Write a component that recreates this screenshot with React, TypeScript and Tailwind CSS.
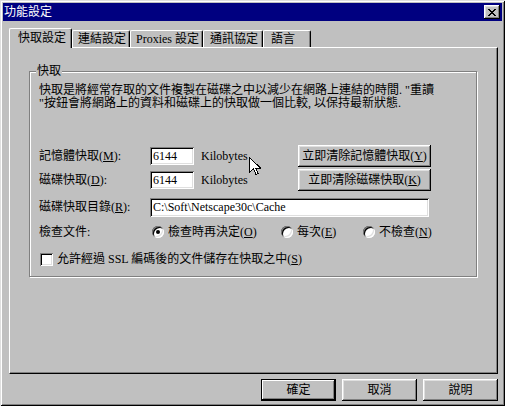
import React from "react";

// win95 bevels
const raised =
  "bg-[#c0c0c0] shadow-[inset_-1px_-1px_0_#000,inset_1px_1px_0_#fff,inset_-2px_-2px_0_#808080,inset_2px_2px_0_#dfdfdf]";
const sunken =
  "bg-white shadow-[inset_1px_1px_0_#808080,inset_-1px_-1px_0_#fff,inset_2px_2px_0_#000,inset_-2px_-2px_0_#dfdfdf]";

const tabs = [
  { label: "快取設定", cls: "w-[63px] pl-[8px]", active: true },
  { label: "連結設定", cls: "w-[58px] pl-[5px]" },
  { label: "Proxies 設定", cls: "w-[73px] pl-[5px]" },
  { label: "通訊協定", cls: "w-[60px] pl-[6px]" },
  { label: "語言", cls: "w-[48px] pl-[7px]" },
];

function Key({ k }: { k: string }) {
  return (
    <>
      (<span className="underline underline-offset-[1px]">{k}</span>)
    </>
  );
}

function Radio({ checked }: { checked?: boolean }) {
  return (
    <span
      className={`flex size-[12px] shrink-0 items-center justify-center rounded-full ${sunken}`}
    >
      {checked && <span className="size-[4px] rounded-full bg-black" />}
    </span>
  );
}

function Cursor() {
  return (
    <svg
      width="12"
      height="19"
      viewBox="0 0 12 19"
      shapeRendering="crispEdges"
      className="pointer-events-none absolute left-[249px] top-[157px]"
    >
      <path
        d="M0.5 0.5 V15.5 L4.5 11.5 L7 17.5 L9 16.5 L6.5 11 H11.5 Z"
        fill="#fff"
        stroke="#000"
        strokeWidth="1"
      />
    </svg>
  );
}

export default function App() {
  return (
    <div className="relative h-[406px] w-[505px] overflow-hidden bg-[#c0c0c0] px-[3px] pt-[3px] font-['Liberation_Serif','Noto_Sans_CJK_TC',serif] text-[12px] leading-[13px] text-black shadow-[inset_1px_1px_0_#dfdfdf,inset_-1px_-1px_0_#000,inset_2px_2px_0_#fff,inset_-2px_-2px_0_#808080]">
      {/* title bar */}
      <div className="flex h-[18px] items-center justify-between bg-[#000080] pl-[1px] pr-[2px]">
        <span className="text-white">功能設定</span>
        <button className={`flex h-[14px] w-[16px] items-center justify-center ${raised}`}>
          <svg width="8" height="7" viewBox="0 0 8 7" shapeRendering="crispEdges">
            <path
              d="M0 0h2v1h1v1h2v-1h1v-1h2v1h-1v1h-1v1h-1v1h1v1h1v1h1v1h-2v-1h-1v-1h-2v1h-1v1h-2v-1h1v-1h1v-1h1v-1h-1v-1h-1v-1h-1z"
              fill="#000"
            />
          </svg>
        </button>
      </div>

      {/* tabs */}
      <div className="ml-[6px] mt-[7px] flex h-[19px] items-end">
        {tabs.map((t) =>
          t.active ? (
            <div
              key={t.label}
              className={`relative z-10 -mb-px flex h-[20px] items-center rounded-t-[2px] border-l border-r border-t border-white border-r-black bg-[#c0c0c0] shadow-[inset_-1px_0_0_#808080] ${t.cls}`}
            >
              {t.label}
            </div>
          ) : (
            <div
              key={t.label}
              className={`flex h-[17px] items-center rounded-t-[2px] border-l border-r border-t border-white border-r-black shadow-[inset_-1px_0_0_#808080] ${t.cls}`}
            >
              {t.label}
            </div>
          )
        )}
      </div>

      {/* tab panel */}
      <div className="ml-[6px] h-[327px] w-[489px] border border-white border-b-black border-r-black pt-[23px] shadow-[inset_-1px_-1px_0_#808080]">
        <div className="relative ml-[19px] w-[448px] border border-[#808080] pb-[10px] pl-[9px] pt-[12px] shadow-[inset_1px_1px_0_#fff,1px_1px_0_#fff]">
          <span className="absolute -top-[7px] left-[6px] bg-[#c0c0c0] px-[1px]">快取</span>

          <p>
            快取是將經常存取的文件複製在磁碟之中以減少在網路上連結的時間. "重讀
            <br />
            "按鈕會將網路上的資料和磁碟上的快取做一個比較, 以保持最新狀態.
          </p>

          <div className="mt-[35px] flex h-[22px] items-center">
            <span className="w-[111px]">
              記憶體快取<Key k="M" />:
            </span>
            <span className={`flex h-[18px] w-[44px] items-center pl-[3px] ${sunken}`}>6144</span>
            <span className="w-[104px] pl-[7px]">Kilobytes</span>
            <button className={`h-[22px] w-[133px] ${raised}`}>
              立即清除記憶體快取<Key k="Y" />
            </button>
          </div>

          <div className="mt-[2px] flex h-[22px] items-center">
            <span className="w-[111px]">
              磁碟快取<Key k="D" />:
            </span>
            <span className={`flex h-[18px] w-[44px] items-center pl-[3px] ${sunken}`}>6144</span>
            <span className="w-[104px] pl-[7px]">Kilobytes</span>
            <button className={`h-[22px] w-[133px] ${raised}`}>
              立即清除磁碟快取<Key k="K" />
            </button>
          </div>

          <div className="mt-[7px] flex h-[19px] items-center">
            <span className="w-[111px]">
              磁碟快取目錄<Key k="R" />:
            </span>
            <span className={`flex h-[19px] w-[279px] items-center pl-[3px] ${sunken}`}>
              C:\Soft\Netscape30c\Cache
            </span>
          </div>

          <div className="mt-[7px] flex h-[16px] items-center">
            <span className="w-[111px]">檢查文件:</span>
            <span className="flex w-[131px] items-center gap-[4px] pl-[2px]">
              <Radio checked />
              <span>
                檢查時再決定<Key k="O" />
              </span>
            </span>
            <span className="flex w-[82px] items-center gap-[4px]">
              <Radio />
              <span>
                每次<Key k="E" />
              </span>
            </span>
            <span className="flex items-center gap-[4px]">
              <Radio />
              <span>
                不檢查<Key k="N" />
              </span>
            </span>
          </div>

          <div className="mt-[13px] flex h-[13px] items-center gap-[4px] pl-[1px]">
            <span className={`size-[13px] shrink-0 ${sunken}`} />
            <span>
              允許經過 SSL 編碼後的文件儲存在快取之中<Key k="S" />
            </span>
          </div>
        </div>
      </div>

      {/* dialog buttons */}
      <div className="ml-[6px] mt-[5px] flex w-[489px] justify-end gap-[6px]">
        <button className="h-[22px] w-[75px] border border-black bg-[#c0c0c0] shadow-[inset_-1px_-1px_0_#000,inset_1px_1px_0_#fff,inset_-2px_-2px_0_#808080]">
          確定
        </button>
        <button className={`h-[22px] w-[75px] ${raised}`}>取消</button>
        <button className={`h-[22px] w-[75px] ${raised}`}>說明</button>
      </div>

      <Cursor />
    </div>
  );
}
